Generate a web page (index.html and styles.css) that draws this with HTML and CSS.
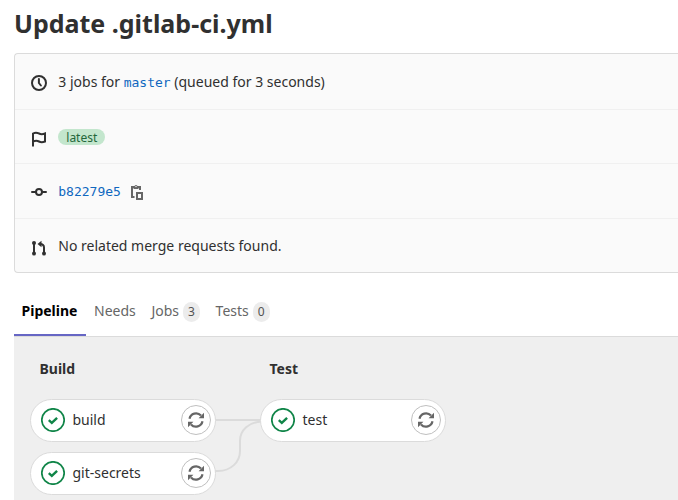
FILE: index.html
```html
<!DOCTYPE html>
<html lang="en">
<head>
<meta charset="utf-8">
<title>Update .gitlab-ci.yml</title>
<link rel="stylesheet" href="styles.css">
</head>
<body>
<svg class="sprite" aria-hidden="true">
  <symbol id="retry" viewBox="0 0 16 16"><path d="M1.500 6.800A6.700 6.700 0 0 1 13 3.600M14.500 9.200A6.700 6.700 0 0 1 3 12.400" fill="none" stroke="currentColor" stroke-width="2.200"/><path d="M16 .8v5.400H10.600zM0 15.200V9.800H5.400z" fill="currentColor"/></symbol>
  <symbol id="success" viewBox="0 0 24 24"><circle cx="12" cy="12" r="11.200" fill="#fff" stroke="currentColor" stroke-width="1.700"/><path d="M7.800 12.100l3 2.700 5.300-5" fill="none" stroke="currentColor" stroke-width="2.400"/></symbol>
</svg>
<main class="page">
  <h1 class="title">Update .gitlab-ci.yml</h1>
  <section class="info">
    <div class="row row-jobs">
      <svg class="icon" viewBox="0 0 16 16"><circle cx="8" cy="8" r="7" fill="none" stroke="currentColor" stroke-width="2"/><path d="M7.900 4v4l2 2.500" fill="none" stroke="currentColor" stroke-width="2" stroke-linecap="round"/></svg>
      <span>3 jobs for <a class="mono">master</a> (queued for 3 seconds)</span>
    </div>
    <div class="row row-label">
      <svg class="icon" viewBox="0 0 16 16"><path d="M2 15.500V2.500C5 .8 6.500 1.700 8 2.500s3.500 1 6 0v8c-2.500 1-4.500.8-6 0s-3.500-1-6 0" fill="none" stroke="currentColor" stroke-width="2"/></svg>
      <span class="badge"><span>latest</span></span>
    </div>
    <div class="row row-commit">
      <svg class="icon" viewBox="0 0 16 16"><circle cx="8" cy="8" r="3" fill="none" stroke="currentColor" stroke-width="2"/><path d="M1 8h4M11 8h4" stroke="currentColor" stroke-width="2" stroke-linecap="round"/></svg>
      <a class="mono">b82279e5</a>
      <svg class="icon copy" viewBox="0 0 16 16"><path d="M5.500 13H3V3h8v3" fill="none" stroke="currentColor" stroke-width="2"/><path d="M4.500 2h1a1.600 1.600 0 0 1 3 0h1v3h-5z" fill="currentColor"/><path d="M8 9h5v6H8z" fill="none" stroke="currentColor" stroke-width="2"/><circle cx="7" cy="2.500" r=".7" fill="#fafafa"/></svg>
    </div>
    <div class="row row-merge">
      <svg class="icon" viewBox="0 0 16 16"><path d="M3 3v10M13 13V7.500Q13 4 9 4" fill="none" stroke="currentColor" stroke-width="2"/><circle cx="3" cy="3" r="2" fill="currentColor"/><circle cx="3" cy="13.500" r="2" fill="currentColor"/><circle cx="13" cy="13.500" r="2" fill="currentColor"/><path d="M10.500.8v6.400L6.500 4z" fill="currentColor"/></svg>
      <span>No related merge requests found.</span>
    </div>
  </section>
  <nav class="tabs">
    <a class="tab active">Pipeline</a>
    <a class="tab">Needs</a>
    <a class="tab">Jobs<span class="count">3</span></a>
    <a class="tab">Tests<span class="count">0</span></a>
  </nav>
  <section class="graph">
    <svg class="links" viewBox="0 0 48 60"><path d="M0 7h48M0 58h4C17 58 26 49 26 38V28C26 17 35 9 48 8.500" fill="none" stroke="#dbdbdb" stroke-width="2"/></svg>
    <div class="stage">
      <h2 class="stage-name">Build</h2>
      <div class="job"><svg class="status"><use href="#success"/></svg><span>build</span><button class="action" aria-label="Retry"><svg><use href="#retry"/></svg></button></div>
      <div class="job"><svg class="status"><use href="#success"/></svg><span>git-secrets</span><button class="action" aria-label="Retry"><svg><use href="#retry"/></svg></button></div>
    </div>
    <div class="stage">
      <h2 class="stage-name">Test</h2>
      <div class="job"><svg class="status"><use href="#success"/></svg><span>test</span><button class="action" aria-label="Retry"><svg><use href="#retry"/></svg></button></div>
    </div>
  </section>
</main>
</body>
</html>
```
FILE: styles.css
```css
* { box-sizing: border-box; }
body {
  margin: 0;
  height: 500px;
  overflow: hidden;
  background: #fff;
  color: #303030;
  font: 14px/20px "Noto Sans", sans-serif;
}
.sprite { position: absolute; width: 0; height: 0; }
.page { padding-left: 14px; }
.title { margin: 0; height: 53px; padding-top: 7px; font-size: 25px; line-height: 32px; font-weight: 700; }
.info {
  height: 220px;
  border: 1px solid #dbdbdb;
  border-right: 0;
  border-radius: 4px 0 0 4px;
  background: #fafafa;
}
.row { display: flex; align-items: center; height: 55px; padding: 2px 0 0 16px; border-bottom: 1px solid #f0f0f0; }
.row-jobs { height: 56px; }
.row-label { height: 54px; }
.row-merge { height: 53px; padding-top: 0; border-bottom: 0; }
.icon { flex: none; width: 16px; height: 16px; margin-right: 11.300px; }
.row-label .icon { margin-top: 2px; }
.row-merge .icon { margin-top: 4px; }
.mono { color: #1068bf; font: 13px/20px "DejaVu Sans Mono", monospace; }
.badge { height: 16px; padding: 0 8px; border-radius: 8px; background: #c3e6cd; color: #24663b; font-size: 12px; line-height: 17px; }
.row-label .badge { margin-top: -1px; }
.row-commit .copy { margin: 0 0 0 8px; color: #666; }
.tabs { display: flex; height: 64px; padding-top: 13px; border-bottom: 1px solid #dbdbdb; color: #666; }
.tab { display: flex; align-items: center; height: 50px; padding: 0 7.700px 0 8px; }
.active { width: 72px; border-bottom: 2px solid #6666c4; color: #000; font-weight: 700; padding: 2px 0 0 7.500px; }
.count { margin: 1px 0 0 4px; padding: 0 5px; height: 20px; border-radius: 10px; background: #ececec; color: #525252; font-size: 12px; line-height: 19px; }
.graph { position: relative; display: flex; gap: 44px; height: 163px; padding: 22px 0 0 16px; background: #efefef; }
.stage { position: relative; width: 186px; }
.stage-name { margin: 0 0 20px 9.500px; font-size: 14px; line-height: 20px; font-weight: 700; }
.job { display: flex; align-items: center; height: 43px; margin-bottom: 10px; padding: 0 4px 1px 10px; border: 1px solid #dbdbdb; border-radius: 22px; background: #fff; }
.status { width: 24px; height: 24px; margin-right: 7.500px; color: #108548; }
.action { display: grid; place-items: center; width: 30px; height: 30px; margin-left: auto; padding: 0; border: 1px solid #bfbfbf; border-radius: 50%; background: #fff; color: #666; }
.action svg { width: 16px; height: 16px; }
.links { position: absolute; left: 200px; top: 76px; width: 48px; height: 60px; }
```
